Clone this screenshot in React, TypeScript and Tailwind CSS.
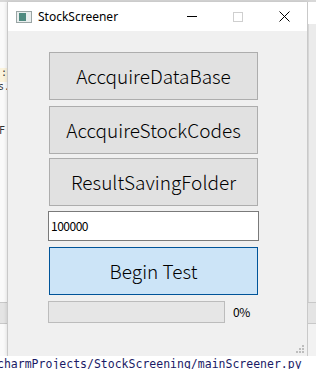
import React from 'react';

const BTN = 'h-[48px] w-[209px] border border-[#adadad] bg-[#e1e1e1] text-[19px] font-extralight text-black flex items-center justify-center';

const App: React.FC = () => {
    return (
        <div className="w-[316px] h-[369px] bg-white overflow-hidden flex flex-col font-['Noto_Sans_CJK_KR',sans-serif]">
            <div className="h-[2px] bg-[#d8d8d8]" />
            <div className="flex h-[355px]">
                {/* ide behind, left */}
                <div className="w-[7px] bg-[#fafafa] flex flex-col text-[10px] leading-none text-[#333] font-['DejaVu_Sans_Mono',monospace] overflow-hidden">
                    <div className="h-[66px]" />
                    <div className="h-[14px] bg-[#fbf3dc] pl-[1px]">:</div>
                    <div className="h-[14px] -ml-[2px]">s.</div>
                    <div className="h-[30px]" />
                    <div className="h-[14px] -ml-[1px]">F</div>
                    <div className="flex-1" />
                    <div className="h-[22px] bg-[#e4e4e4] border-y border-[#c8c8c8]" />
                    <div className="h-[33px]" />
                </div>

                {/* window */}
                <div className="w-[301px] flex flex-col border-x border-b border-[#c9c9c9] shadow-[0_0_4px_rgba(0,0,0,0.15)]">
                    <div className="h-[29px] bg-white flex items-center text-[12px] text-black font-['Noto_Sans',sans-serif]">
                        <div className="ml-[8px] w-[16px] h-[12px] border border-[#9aa5a5] bg-[#e9eeee] flex items-center">
                            <div className="ml-[2px] w-[7px] h-[8px] bg-[#4f8a80]" />
                        </div>
                        <span className="ml-[6px]">StockScreener</span>
                        <div className="flex-1" />
                        <div className="w-[46px] h-[29px] flex items-center justify-center">
                            <div className="w-[10px] h-[1px] bg-black" />
                        </div>
                        <div className="w-[46px] h-[29px] flex items-center justify-center">
                            <div className="w-[10px] h-[10px] border border-[#cfcfcf]" />
                        </div>
                        <div className="w-[46px] h-[29px] flex items-center justify-center">
                            <svg width="11" height="11" viewBox="0 0 11 11">
                                <path d="M0.5 0.5 L10.5 10.5 M10.5 0.5 L0.5 10.5" stroke="#000" strokeWidth="1" />
                            </svg>
                        </div>
                    </div>
                    <div className="flex-1 bg-[#f0f0f0] flex flex-col pt-[21px] pl-[41px] relative">
                        <div className={BTN}>AccquireDataBase</div>
                        <div className={`${BTN} mt-[6px]`}>AccquireStockCodes</div>
                        <div className={`${BTN} mt-[4px]`}>ResultSavingFolder</div>
                        <div className="mt-[5px] -ml-[1px] h-[30px] w-[211px] bg-white border border-[#7a7a7a] flex items-center pl-[2px] text-[12px] text-black tracking-[-0.5px]">
                            100000
                        </div>
                        <div className="mt-[6px] h-[48px] w-[209px] border border-[#005499] bg-[#cce4f7] text-[19px] font-extralight text-black flex items-center justify-center">
                            Begin Test
                        </div>
                        <div className="mt-[6px] -ml-[1px] flex items-center">
                            <div className="h-[22px] w-[177px] bg-[#e6e6e6] border border-[#bcbcbc]" />
                            <span className="ml-[8px] text-[12px] text-black tracking-[-0.5px]">0%</span>
                        </div>
                        <div className="absolute right-[3px] bottom-[3px] grid grid-cols-3 gap-[1px]">
                            <span className="w-[2px] h-[2px]" />
                            <span className="w-[2px] h-[2px]" />
                            <span className="w-[2px] h-[2px] bg-[#bdbdbd]" />
                            <span className="w-[2px] h-[2px]" />
                            <span className="w-[2px] h-[2px] bg-[#bdbdbd]" />
                            <span className="w-[2px] h-[2px] bg-[#bdbdbd]" />
                            <span className="w-[2px] h-[2px] bg-[#bdbdbd]" />
                            <span className="w-[2px] h-[2px] bg-[#bdbdbd]" />
                            <span className="w-[2px] h-[2px] bg-[#bdbdbd]" />
                        </div>
                    </div>
                </div>

                {/* ide behind, right */}
                <div className="w-[8px] flex flex-col">
                    <div className="h-[22px] bg-white" />
                    <div className="flex-1 bg-[#ebebeb] border-l border-[#d6d6d6]" />
                    <div className="h-[22px] bg-[#e4e4e4] border-y border-[#c8c8c8]" />
                    <div className="h-[33px] bg-[#f2f2f2]" />
                </div>
            </div>
            <div className="h-[12px] bg-white text-[11.5px] leading-[16px] text-[#1a1a66] whitespace-nowrap font-['DejaVu_Sans_Mono',monospace] -mt-[1px] -ml-[3px]">
                charmProjects/StockScreening/mainScreener.py
            </div>
        </div>
    );
};

export default App;
